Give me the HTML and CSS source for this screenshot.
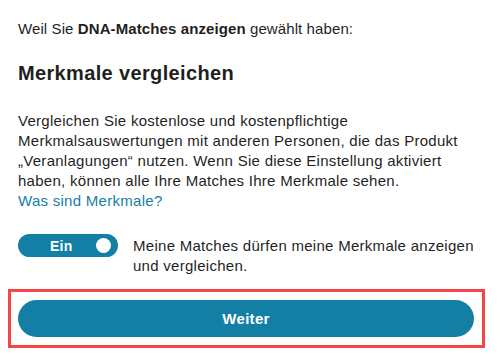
FILE: index.html
```html
<!DOCTYPE html>
<html lang="de">
<head>
<meta charset="utf-8">
<link rel="stylesheet" href="styles.css">
</head>
<body>
<main class="page">
  <p class="intro">Weil Sie <strong>DNA-Matches anzeigen</strong> gewählt haben:</p>
  <h1 class="title">Merkmale vergleichen</h1>
  <p class="desc">Vergleichen Sie kostenlose und kostenpflichtige Merkmalsauswertungen mit anderen Personen, die das Produkt „Veranlagungen“ nutzen. Wenn Sie diese Einstellung aktiviert haben, können alle Ihre Matches Ihre Merkmale sehen.<br><a class="link" href="#">Was sind Merkmale?</a></p>
  <div class="setting">
    <div class="toggle"><span class="toggle-label">Ein</span><span class="knob"></span></div>
    <p class="setting-text">Meine Matches dürfen meine Merkmale anzeigen und vergleichen.</p>
  </div>
  <div class="highlight">
    <button class="btn">Weiter</button>
  </div>
</main>
</body>
</html>
```
FILE: styles.css
```css
* { box-sizing: border-box; }
html, body { margin: 0; padding: 0; background: #fff; }
body {
  font-family: "Liberation Sans", Arial, sans-serif;
  color: #1f1f1f;
  font-size: 15px;
  letter-spacing: 0.28px;
}
.page {
  width: 501px;
  padding: 0 8px 0 8px;
}
.intro {
  margin: 0;
  padding: 19px 0 0 10px;
  line-height: 20px;
  letter-spacing: 0.1px;
}
.intro strong { font-weight: bold; }
.title {
  margin: 0;
  padding: 21px 0 0 10px;
  font-size: 20px;
  line-height: 26px;
  font-weight: bold;
  letter-spacing: 0.35px;
}
.desc {
  margin: 0;
  padding: 25px 0 0 10px;
  line-height: 20px;
  max-width: 462px;
}
.link { color: #1580a6; text-decoration: none; }
.setting {
  display: flex;
  align-items: flex-start;
  gap: 15px;
  padding: 23px 0 0 10px;
}
.toggle {
  flex: none;
  width: 100px;
  height: 23px;
  border-radius: 12px;
  background: #137fa5;
  display: flex;
  align-items: center;
  justify-content: space-between;
  padding: 0 7px 0 32px;
}
.toggle-label {
  color: #fff;
  font-weight: bold;
  font-size: 14px;
  letter-spacing: 0.2px;
}
.knob {
  width: 15px;
  height: 15px;
  border-radius: 50%;
  background: #fff;
}
.setting-text {
  margin: 0;
  margin-top: 2px;
  line-height: 20px;
}
.highlight {
  margin-top: 13px;
  border: 3px solid #f54447;
  padding: 8px 8px 8px 7px;
  width: 477px;
}
.btn {
  display: block;
  width: 100%;
  height: 37px;
  border: 0;
  border-radius: 19px;
  background: #137fa5;
  color: #fff;
  font-family: "Liberation Sans", Arial, sans-serif;
  font-weight: bold;
  font-size: 15px;
  letter-spacing: 0.3px;
}
```
